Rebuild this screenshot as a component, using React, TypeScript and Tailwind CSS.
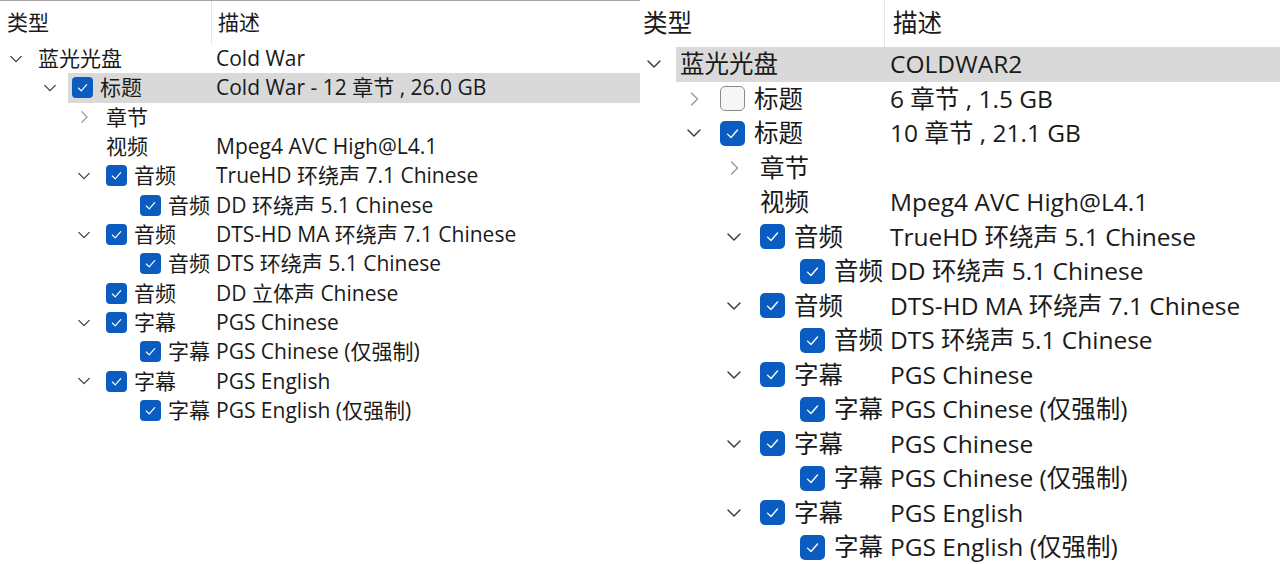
import React from "react";

type Row = {
  label: string;
  desc?: string;
  depth: number;
  chevron?: "down" | "right";
  check?: "on" | "off";
  selected?: boolean;
};

const leftRows: Row[] = [
  { label: "蓝光光盘", desc: "Cold War", depth: 0, chevron: "down" },
  { label: "标题", desc: "Cold War - 12 章节 , 26.0 GB", depth: 1, chevron: "down", check: "on", selected: true },
  { label: "章节", depth: 2, chevron: "right" },
  { label: "视频", desc: "Mpeg4 AVC High@L4.1", depth: 2 },
  { label: "音频", desc: "TrueHD 环绕声 7.1 Chinese", depth: 2, chevron: "down", check: "on" },
  { label: "音频", desc: "DD 环绕声 5.1 Chinese", depth: 3, check: "on" },
  { label: "音频", desc: "DTS-HD MA 环绕声 7.1 Chinese", depth: 2, chevron: "down", check: "on" },
  { label: "音频", desc: "DTS 环绕声 5.1 Chinese", depth: 3, check: "on" },
  { label: "音频", desc: "DD 立体声 Chinese", depth: 2, check: "on" },
  { label: "字幕", desc: "PGS Chinese", depth: 2, chevron: "down", check: "on" },
  { label: "字幕", desc: "PGS Chinese (仅强制)", depth: 3, check: "on" },
  { label: "字幕", desc: "PGS English", depth: 2, chevron: "down", check: "on" },
  { label: "字幕", desc: "PGS English (仅强制)", depth: 3, check: "on" },
];

const rightRows: Row[] = [
  { label: "蓝光光盘", desc: "COLDWAR2", depth: 0, chevron: "down", selected: true },
  { label: "标题", desc: "6 章节 , 1.5 GB", depth: 1, chevron: "right", check: "off" },
  { label: "标题", desc: "10 章节 , 21.1 GB", depth: 1, chevron: "down", check: "on" },
  { label: "章节", depth: 2, chevron: "right" },
  { label: "视频", desc: "Mpeg4 AVC High@L4.1", depth: 2 },
  { label: "音频", desc: "TrueHD 环绕声 5.1 Chinese", depth: 2, chevron: "down", check: "on" },
  { label: "音频", desc: "DD 环绕声 5.1 Chinese", depth: 3, check: "on" },
  { label: "音频", desc: "DTS-HD MA 环绕声 7.1 Chinese", depth: 2, chevron: "down", check: "on" },
  { label: "音频", desc: "DTS 环绕声 5.1 Chinese", depth: 3, check: "on" },
  { label: "字幕", desc: "PGS Chinese", depth: 2, chevron: "down", check: "on" },
  { label: "字幕", desc: "PGS Chinese (仅强制)", depth: 3, check: "on" },
  { label: "字幕", desc: "PGS Chinese", depth: 2, chevron: "down", check: "on" },
  { label: "字幕", desc: "PGS Chinese (仅强制)", depth: 3, check: "on" },
  { label: "字幕", desc: "PGS English", depth: 2, chevron: "down", check: "on" },
  { label: "字幕", desc: "PGS English (仅强制)", depth: 3, check: "on" },
];

type Cfg = {
  panel: string;
  header: string;
  headCol1: string;
  headCol2: string;
  row: string;
  leading: string[];
  label: string[];
  slot: string;
  chev: string;
  cb: string;
  cbGap: string;
};

const leftCfg: Cfg = {
  panel: "text-[21px] border-t border-[#a3a3a3]",
  header: "h-[43px]",
  headCol1: "w-[212px] pl-[7px] border-r border-[#e6e6e6]",
  headCol2: "pl-[6px]",
  row: "h-[29.33px]",
  leading: ["w-[34px]", "w-[68px]", "w-[102px]", "w-[136px]"],
  label: ["w-[182px]", "w-[148px]", "w-[114px]", "w-[80px]"],
  slot: "w-[24px] mr-[6px]",
  chev: "w-[14px] h-[14px]",
  cb: "w-[21px] h-[21px] rounded-[4px]",
  cbGap: "mr-[7px]",
};

const rightCfg: Cfg = {
  panel: "text-[24.5px]",
  header: "h-[47px]",
  headCol1: "w-[245px] pl-[3px] border-r border-[#e6e6e6]",
  headCol2: "pl-[8px]",
  row: "h-[34.5px]",
  leading: ["w-[36px]", "w-[76px]", "w-[116px]", "w-[156px]"],
  label: ["w-[214px]", "w-[174px]", "w-[134px]", "w-[94px]"],
  slot: "w-[28px] mr-[8px]",
  chev: "w-[16px] h-[16px]",
  cb: "w-[25px] h-[25px] rounded-[5px]",
  cbGap: "mr-[9px]",
};

function Chevron({ dir, cls }: { dir: "down" | "right"; cls: string }) {
  return (
    <svg viewBox="0 0 16 16" className={cls} fill="none">
      {dir === "down" ? (
        <polyline points="2,5 8,11 14,5" stroke="#3f3f3f" strokeWidth="1.5" strokeLinecap="round" strokeLinejoin="round" />
      ) : (
        <polyline points="5.5,2 11.5,8 5.5,14" stroke="#999999" strokeWidth="1.4" strokeLinecap="round" strokeLinejoin="round" />
      )}
    </svg>
  );
}

function Checkbox({ state, cls }: { state: "on" | "off"; cls: string }) {
  if (state === "off") {
    return <span className={`${cls} shrink-0 border border-[#8a8a8a] bg-[#f6f6f6]`} />;
  }
  return (
    <span className={`${cls} shrink-0 bg-[#0b5cc0] flex items-center justify-center`}>
      <svg viewBox="0 0 20 20" className="w-full h-full" fill="none">
        <polyline points="6,10.5 8.8,13.2 14,7.2" stroke="#ffffff" strokeWidth="1.1" strokeLinecap="round" strokeLinejoin="round" />
      </svg>
    </span>
  );
}

function Panel({ rows, cfg }: { rows: Row[]; cfg: Cfg }) {
  return (
    <div className={`w-[640px] h-[564px] overflow-hidden bg-white text-[#1a1a1a] ${cfg.panel}`}>
      <div className={`flex ${cfg.header}`}>
        <div className={`flex items-center h-full ${cfg.headCol1}`}>类型</div>
        <div className={`flex items-center h-full ${cfg.headCol2}`}>描述</div>
      </div>
      {rows.map((r, i) => (
        <div key={i} className={`flex items-stretch ${cfg.row}`}>
          <div className={`shrink-0 flex items-center justify-end ${cfg.leading[r.depth]}`}>
            <span className={`flex items-center justify-center ${cfg.slot}`}>
              {r.chevron ? <Chevron dir={r.chevron} cls={cfg.chev} /> : null}
            </span>
          </div>
          <div className={`flex-1 flex items-center whitespace-nowrap ${r.selected ? "bg-[#d9d9d9]" : ""}`}>
            <div className={`shrink-0 flex items-center pl-[4px] ${cfg.label[r.depth]}`}>
              {r.check ? (
                <span className={cfg.cbGap + " flex items-center"}>
                  <Checkbox state={r.check} cls={cfg.cb} />
                </span>
              ) : null}
              <span>{r.label}</span>
            </div>
            <div>{r.desc ?? ""}</div>
          </div>
        </div>
      ))}
    </div>
  );
}

export default function App() {
  return (
    <div
      className="flex w-[1280px] h-[564px] bg-white leading-none"
      style={{ fontFamily: '"Open Sans", "Noto Sans CJK SC", sans-serif' }}
    >
      <Panel rows={leftRows} cfg={leftCfg} />
      <Panel rows={rightRows} cfg={rightCfg} />
    </div>
  );
}
